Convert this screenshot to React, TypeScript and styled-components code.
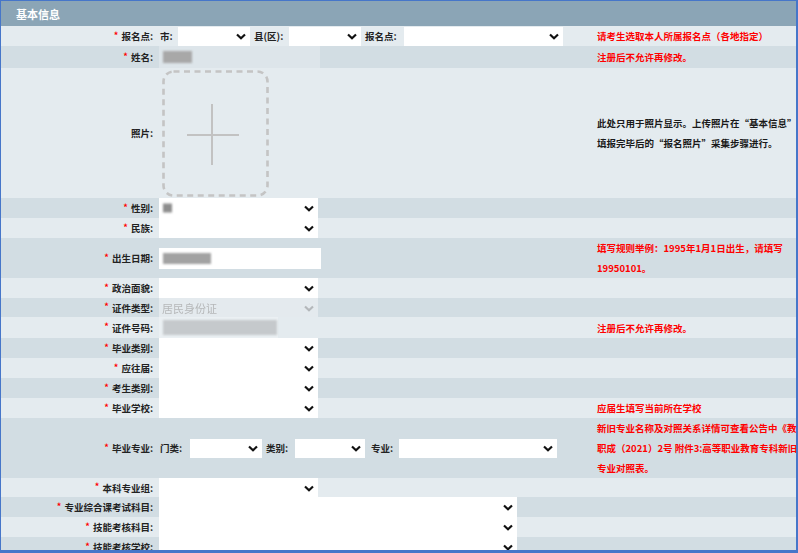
import React from "react";
import styled, { createGlobalStyle } from "styled-components";

const GlobalStyle = createGlobalStyle`
  html, body {
    margin: 0;
    padding: 0;
  }
  body {
    font-family: "Noto Sans CJK SC", "Liberation Sans", sans-serif;
    background: #ffffff;
  }
`;

const Frame = styled.div`
  box-sizing: border-box;
  width: 798px;
  height: 553px;
  overflow: hidden;
  border: solid #4676c9;
  border-width: 1px 2px 3px 1px;
  background: #e4ebef;
`;

const Sheet = styled.div`
  width: 880px;
`;

const Header = styled.div`
  height: 25px;
  display: flex;
  align-items: center;
  padding-left: 15px;
  background: #8ba5b6;
  color: #ffffff;
  font-size: 11px;
  font-weight: 700;
`;

const Rows = styled.div`
  display: flex;
  flex-direction: column;
`;

const Row = styled.div<{ $h: number }>`
  display: grid;
  grid-template-columns: 156px 438px 1fr;
  height: ${(p) => p.$h}px;
  background: #e4ebef;

  &:nth-child(even) {
    background: #d2dde3;
  }
`;

const Label = styled.div`
  display: flex;
  align-items: center;
  justify-content: flex-end;
  padding-right: 4px;
  font-size: 9.5px;
  font-weight: 700;
  color: #222222;
  white-space: nowrap;
`;

const Star = styled.span`
  position: relative;
  top: -1px;
  margin-right: 3px;
  color: #ff0000;
  font-size: 9px;
`;

const Value = styled.div`
  display: flex;
  align-items: center;
  padding-left: 2px;
`;

const Hint = styled.div<{ $tone: "alert" | "plain" }>`
  display: flex;
  flex-direction: column;
  justify-content: center;
  padding-left: 2px;
  font-size: 9.5px;
  font-weight: 700;
  line-height: 20px;
  white-space: nowrap;
  color: ${(p) => (p.$tone === "alert" ? "#ff0000" : "#1a1a1a")};
`;

const InlineLabel = styled.span<{ $w: number; $lead?: number }>`
  box-sizing: border-box;
  flex-shrink: 0;
  width: ${(p) => p.$w}px;
  padding-left: ${(p) => p.$lead ?? 4}px;
  font-size: 9.5px;
  font-weight: 700;
  color: #222222;
  white-space: nowrap;
`;

const SelectBox = styled.span<{ $w: number; $h?: number; $off?: boolean }>`
  position: relative;
  display: flex;
  flex-shrink: 0;
  width: ${(p) => p.$w}px;
  height: ${(p) => (p.$h ? `${p.$h}px` : "100%")};
  background: ${(p) => (p.$off ? "rgba(255, 255, 255, 0.4)" : "#ffffff")};
`;

const NativeSelect = styled.select`
  appearance: none;
  display: block;
  box-sizing: border-box;
  width: 100%;
  height: 100%;
  margin: 0;
  padding: 0 16px 0 3px;
  border: none;
  outline: none;
  background: transparent;
  font-family: inherit;
  font-size: 11px;
  color: #222222;

  &:disabled {
    color: #a3a3a3;
  }
`;

const Caret = styled.svg<{ $off?: boolean }>`
  position: absolute;
  right: 4px;
  top: 50%;
  margin-top: -3px;
  pointer-events: none;
  stroke: ${(p) => (p.$off ? "#b4b8bb" : "#111111")};
`;

const Overlay = styled.span`
  position: absolute;
  left: 4px;
  top: 50%;
  transform: translateY(-50%);
  display: flex;
  pointer-events: none;
`;

const TextBox = styled.span<{ $w: number; $h: number; $fill: string }>`
  box-sizing: border-box;
  display: flex;
  align-items: center;
  flex-shrink: 0;
  width: ${(p) => p.$w}px;
  height: ${(p) => p.$h}px;
  padding-left: 4px;
  background: ${(p) => p.$fill};
`;

const Masked = styled.span<{ $w: number; $h: number; $tone: string }>`
  display: inline-block;
  width: ${(p) => p.$w}px;
  height: ${(p) => p.$h}px;
  background: ${(p) => p.$tone};
  filter: blur(1px);
`;

const PhotoSlot = styled.svg`
  margin-left: 3px;
  flex-shrink: 0;
`;

type SelectProps = {
  w: number;
  h?: number;
  value?: string;
  disabled?: boolean;
  children?: React.ReactNode;
};

function Select({ w, h, value = "", disabled, children }: SelectProps) {
  return (
    <SelectBox $w={w} $h={h} $off={disabled}>
      <NativeSelect disabled={disabled} defaultValue={value}>
        <option value={value}>{value}</option>
      </NativeSelect>
      {children && <Overlay>{children}</Overlay>}
      <Caret $off={disabled} width="10" height="7" viewBox="0 0 10 7" fill="none" strokeWidth="2.2">
        <polyline points="1,1.5 5,5.3 9,1.5" />
      </Caret>
    </SelectBox>
  );
}

type FieldProps = {
  label: string;
  required?: boolean;
  height?: number;
  hint?: string[];
  plain?: boolean;
  children?: React.ReactNode;
};

function Field({ label, required = true, height = 20, hint, plain, children }: FieldProps) {
  return (
    <Row $h={height}>
      <Label>
        {required && <Star>*</Star>}
        {label}:
      </Label>
      <Value>{children}</Value>
      <Hint $tone={plain ? "plain" : "alert"}>
        {hint?.map((line) => (
          <span key={line}>{line}</span>
        ))}
      </Hint>
    </Row>
  );
}

export default function App() {
  return (
    <>
      <GlobalStyle />
      <Frame>
        <Sheet>
          <Header>基本信息</Header>
          <Rows>
            <Field label="报名点" hint={["请考生选取本人所属报名点（各地指定）"]}>
              <InlineLabel $w={19} $lead={1}>市:</InlineLabel>
              <Select w={72} h={19} />
              <InlineLabel $w={39}>县(区):</InlineLabel>
              <Select w={72} h={19} />
              <InlineLabel $w={43}>报名点:</InlineLabel>
              <Select w={159} h={19} />
            </Field>

            <Field label="姓名" height={22} hint={["注册后不允许再修改。"]}>
              <TextBox $w={161} $h={22} $fill="rgba(255, 255, 255, 0.25)">
                <Masked $w={29} $h={12} $tone="#a8a8a8" />
              </TextBox>
            </Field>

            <Field
              label="照片"
              required={false}
              height={130}
              plain
              hint={["此处只用于照片显示。上传照片在“基本信息”", "填报完毕后的“报名照片”采集步骤进行。"]}
            >
              <PhotoSlot width="107" height="127" viewBox="0 0 107 127" fill="none">
                <rect
                  x="1.5"
                  y="1.5"
                  width="104"
                  height="124"
                  rx="10"
                  stroke="#c4c4c4"
                  strokeWidth="2.6"
                  strokeDasharray="6 4.5"
                />
                <line x1="25" y1="65" x2="77" y2="65" stroke="#c2c2c2" strokeWidth="2" />
                <line x1="50" y1="34" x2="50" y2="95" stroke="#c2c2c2" strokeWidth="2" />
              </PhotoSlot>
            </Field>

            <Field label="性别">
              <Select w={159}>
                <Masked $w={9} $h={9} $tone="#8d8d8d" />
              </Select>
            </Field>

            <Field label="民族">
              <Select w={159} />
            </Field>

            <Field label="出生日期" height={40} hint={["填写规则举例：1995年1月1日出生，请填写", "19950101。"]}>
              <TextBox $w={162} $h={21} $fill="#ffffff">
                <Masked $w={48} $h={11} $tone="#a2a2a2" />
              </TextBox>
            </Field>

            <Field label="政治面貌">
              <Select w={159} />
            </Field>

            <Field label="证件类型" height={19}>
              <Select w={159} value="居民身份证" disabled />
            </Field>

            <Field label="证件号码" height={21} hint={["注册后不允许再修改。"]}>
              <TextBox $w={119} $h={21} $fill="rgba(255, 255, 255, 0.25)">
                <Masked $w={114} $h={15} $tone="#c5c9cc" />
              </TextBox>
            </Field>

            <Field label="毕业类别">
              <Select w={159} />
            </Field>

            <Field label="应往届">
              <Select w={159} />
            </Field>

            <Field label="考生类别">
              <Select w={159} />
            </Field>

            <Field label="毕业学校" hint={["应届生填写当前所在学校"]}>
              <Select w={159} />
            </Field>

            <Field
              label="毕业专业"
              height={60}
              hint={[
                "新旧专业名称及对照关系详情可查看公告中《教育部关于印发职业教育专业目录的通知》（教",
                "职成（2021）2号 附件3:高等职业教育专科新旧专业对照表》中的",
                "专业对照表。",
              ]}
            >
              <InlineLabel $w={31} $lead={1}>门类:</InlineLabel>
              <Select w={72} h={19} />
              <InlineLabel $w={33}>类别:</InlineLabel>
              <Select w={70} h={19} />
              <InlineLabel $w={34} $lead={6}>专业:</InlineLabel>
              <Select w={158} h={19} />
            </Field>

            <Field label="本科专业组" height={19}>
              <Select w={159} />
            </Field>

            <Field label="专业综合课考试科目">
              <Select w={358} />
            </Field>

            <Field label="技能考核科目">
              <Select w={358} />
            </Field>

            <Field label="技能考核学校">
              <Select w={358} />
            </Field>
          </Rows>
        </Sheet>
      </Frame>
    </>
  );
}
